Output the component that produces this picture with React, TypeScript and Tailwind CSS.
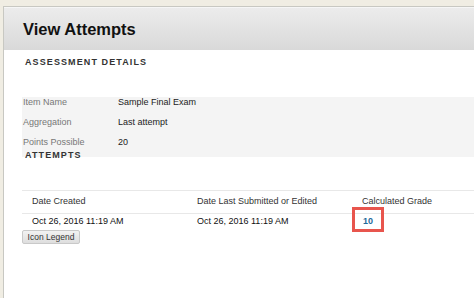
// View Attempts — assessment details + attempts table

const details = [
  { label: "Item Name", value: "Sample Final Exam" },
  { label: "Aggregation", value: "Last attempt" },
  { label: "Points Possible", value: "20" },
];

export default function App() {
  return (
    <div
      className="w-[474px] h-[298px] overflow-hidden bg-[#f0ede3] pt-[6px] pl-[3px]"
      style={{ fontFamily: '"Liberation Sans", Arial, sans-serif' }}
    >
      <div className="h-full bg-white border-l border-t border-[#c8c8c2]">
        {/* Page header */}
        <div className="h-[43px] flex items-center pl-[19px] bg-gradient-to-b from-[#ececec] to-[#d9d9d9] border-t border-[#f6f6f6]">
          <h1 className="text-[16.5px] font-bold text-[#111]">View Attempts</h1>
        </div>

        {/* Assessment details */}
        <h2 className="mt-[6px] pl-[21px] text-[9px] leading-[12px] font-bold tracking-[1.1px] text-[#333]">
          ASSESSMENT DETAILS
        </h2>

        <div className="mt-[29px] ml-[18px] bg-[#f4f4f4] flex flex-col gap-[10px] pb-[10px]">
          {details.map((d) => (
            <div key={d.label} className="flex leading-[10px] text-[9px]">
              <span className="w-[96px] pl-[1px] text-[#777]">{d.label}</span>
              <span className="text-[#222]">{d.value}</span>
            </div>
          ))}
        </div>

        <h2 className="relative -mt-[8px] pl-[21px] text-[9px] leading-[12px] font-bold tracking-[1.1px] text-[#333]">
          ATTEMPTS
        </h2>

        {/* Attempts table */}
        <div className="mt-[29px] ml-[18px] border-t border-[#e8e8e8] text-[9px]">
          <div className="flex h-[23px] items-center border-b border-[#e8e8e8] pl-[10px] text-[#333]">
            <span className="w-[165px]">Date Created</span>
            <span className="w-[165px]">Date Last Submitted or Edited</span>
            <span>Calculated Grade</span>
          </div>
          <div className="flex h-[16px] items-center pl-[10px] text-[#111]">
            <span className="w-[165px]">Oct 26, 2016 11:19 AM</span>
            <span className="w-[165px]">Oct 26, 2016 11:19 AM</span>
            <span className="relative pl-[1px] font-bold text-[#1f6a9a]">
              10
              <span className="absolute left-[-10px] top-[-8px] w-[32px] h-[25px] border-[3px] border-[#e8554d]" />
            </span>
          </div>
          <button className="h-[14px] w-[58px] rounded-[2px] border border-[#c9c9c9] bg-gradient-to-b from-[#f2f2f2] to-[#dedede] text-[8.5px] text-[#333] leading-[12px]">
            Icon Legend
          </button>
        </div>
      </div>
    </div>
  );
}
